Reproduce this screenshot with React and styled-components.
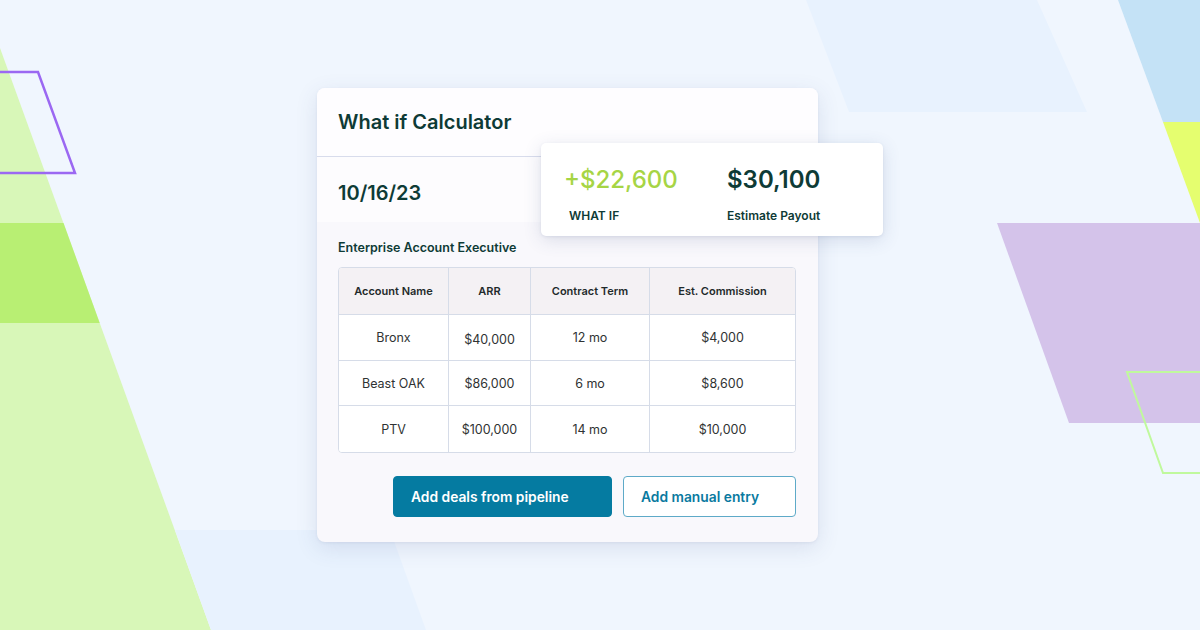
import React from "react";
import styled, { createGlobalStyle } from "styled-components";

const Global = createGlobalStyle`
  * { box-sizing: border-box; }
  html, body { margin: 0; padding: 0; }
  body {
    width: 1200px;
    height: 630px;
    overflow: hidden;
    background: #f0f6fe;
    font-family: Inter, "Noto Sans", "Liberation Sans", sans-serif;
    -webkit-font-smoothing: antialiased;
  }
`;

const Page = styled.div`
  position: relative;
  width: 1200px;
  height: 630px;
  overflow: hidden;
  background: #f0f6fe;
  padding: 88px 0 0 317px;
`;

const Backdrop = styled.svg`
  position: absolute;
  left: 0;
  top: 0;
  width: 1200px;
  height: 630px;
  pointer-events: none;
`;

const Card = styled.div`
  position: relative;
  width: 501px;
  height: 454px;
  border-radius: 8px;
  background: #f9f8fc;
  box-shadow: 0 6px 22px rgba(60, 80, 130, 0.13), 0 1px 3px rgba(60, 80, 130, 0.08);
  display: flex;
  flex-direction: column;
`;

const Header = styled.div`
  height: 69px;
  padding: 0 21px;
  display: flex;
  align-items: center;
  background: #fefdff;
  border-bottom: 1px solid #d8dcec;
  border-radius: 8px 8px 0 0;
`;

const Title = styled.h1`
  margin: 0;
  font-size: 20px;
  line-height: 24px;
  font-weight: 600;
  color: #0e3b36;
`;

const DateRow = styled.div`
  height: 65px;
  padding: 24px 21px 0;
  background: #fdfcfe;
`;

const DateText = styled.div`
  font-size: 20px;
  line-height: 24px;
  font-weight: 600;
  color: #0e3b36;
`;

const Body = styled.div`
  flex: 1;
  padding: 18px 22px 0 21px;
  display: flex;
  flex-direction: column;
`;

const Subtitle = styled.div`
  font-size: 12.5px;
  line-height: 16px;
  font-weight: 600;
  color: #0e3b36;
  margin-bottom: 11px;
`;

const Table = styled.div`
  width: 458px;
  border: 1px solid #d6dce8;
  border-radius: 4px;
  overflow: hidden;
  display: grid;
  grid-template-columns: 110px 82px 119px 1fr;
  background: #ffffff;
`;

const Cell = styled.div`
  height: ${(p) => p.$h}px;
  display: flex;
  align-items: center;
  justify-content: center;
  font-size: ${(p) => (p.$head ? "11px" : "12.5px")};
  font-weight: ${(p) => (p.$head ? 600 : 400)};
  color: ${(p) => (p.$head ? "#1f2a2b" : "#2f3333")};
  background: ${(p) => (p.$head ? "#f4f1f4" : "#ffffff")};
  border-right: ${(p) => (p.$last ? "none" : "1px solid #d6dce8")};
  border-bottom: ${(p) => (p.$bottom ? "none" : "1px solid #d6dce8")};
  padding-top: ${(p) => p.$dy || 0}px;
`;

const Actions = styled.div`
  margin-top: 23px;
  display: flex;
  justify-content: flex-end;
  gap: 11px;
`;

const Button = styled.button`
  height: 41px;
  width: ${(p) => p.$w}px;
  border-radius: 4px;
  padding: 0 17px;
  text-align: left;
  font-family: inherit;
  font-size: 13.8px;
  font-weight: 600;
  cursor: pointer;
  background: ${(p) => (p.$primary ? "#057ba1" : "#ffffff")};
  color: ${(p) => (p.$primary ? "#ffffff" : "#0a7aa0")};
  border: ${(p) => (p.$primary ? "1px solid #057ba1" : "1.5px solid #5eaac8")};
`;

const Popup = styled.div`
  position: absolute;
  left: 224px;
  top: 55px;
  width: 342px;
  height: 93px;
  background: #ffffff;
  border-radius: 5px;
  box-shadow: 0 4px 18px rgba(60, 80, 130, 0.16), 0 1px 3px rgba(60, 80, 130, 0.1);
  padding: 23px 24px 0;
  display: grid;
  grid-template-columns: 162px 1fr;
`;

const Stat = styled.div`
  display: flex;
  flex-direction: column;
`;

const StatValue = styled.div`
  font-size: 24px;
  line-height: 28px;
  font-weight: ${(p) => (p.$green ? 500 : 600)};
  color: ${(p) => (p.$green ? "#a6d545" : "#0e3b36")};
  margin-left: ${(p) => (p.$green ? "-1px" : "0")};
`;

const StatLabel = styled.div`
  margin-top: 14px;
  padding-left: ${(p) => p.$indent || 0}px;
  font-size: 12px;
  line-height: 16px;
  font-weight: 600;
  color: #0e3b36;
`;

const rows = [
  ["Bronx", "$40,000", "12 mo", "$4,000"],
  ["Beast OAK", "$86,000", "6 mo", "$8,600"],
  ["PTV", "$100,000", "14 mo", "$10,000"],
];
const heads = ["Account Name", "ARR", "Contract Term", "Est. Commission"];
const rowHeights = [46, 45, 46];
const offsets = [
  [0, 3, 0, -2],
  [0, 0, 0, -2],
  [0, 0, 0, 0],
];

function Background() {
  return (
    <Backdrop viewBox="0 0 1200 630">
      <polygon points="0,48 211,630 0,630" fill="#d8f7b8" />
      <polygon points="0,223 63.5,223 99.7,323 0,323" fill="#b8ef73" />
      <polygon points="-5,72 38,72 75,173 -5,173" fill="none" stroke="#9b68f2" strokeWidth="2.5" />
      <polygon points="175,530 390,530 426,630 211,630" fill="#e8f2fe" />
      <polygon points="806,0 1037,0 1087,112 849,112" fill="#e8f2fe" />
      <polygon points="1118,0 1200,0 1200,122 1163,122" fill="#c4e2f6" />
      <polygon points="1163,122 1200,122 1200,223" fill="#e5fe6f" />
      <polygon points="997,223 1200,223 1200,423 1069,423" fill="#d4c3ea" />
      <polygon points="1127,372 1210,372 1210,473 1163,473" fill="none" stroke="#c0f99d" strokeWidth="2" />
    </Backdrop>
  );
}

export default function App() {
  return (
    <>
      <Global />
      <Page>
        <Background />
        <Card>
          <Header>
            <Title>What if Calculator</Title>
          </Header>
          <DateRow>
            <DateText>10/16/23</DateText>
          </DateRow>
          <Body>
            <Subtitle>Enterprise Account Executive</Subtitle>
            <Table>
              {heads.map((h, i) => (
                <Cell key={h} $head $h={47} $last={i === 3}>
                  {h}
                </Cell>
              ))}
              {rows.map((r, ri) =>
                r.map((c, ci) => (
                  <Cell
                    key={ri + "-" + ci}
                    $h={rowHeights[ri]}
                    $last={ci === 3}
                    $bottom={ri === rows.length - 1}
                    $dy={offsets[ri][ci]}
                  >
                    {c}
                  </Cell>
                ))
              )}
            </Table>
            <Actions>
              <Button $primary $w={219}>Add deals from pipeline</Button>
              <Button $w={173}>Add manual entry</Button>
            </Actions>
          </Body>
          <Popup>
            <Stat>
              <StatValue $green>+$22,600</StatValue>
              <StatLabel $indent={4}>WHAT IF</StatLabel>
            </Stat>
            <Stat>
              <StatValue>$30,100</StatValue>
              <StatLabel>Estimate Payout</StatLabel>
            </Stat>
          </Popup>
        </Card>
      </Page>
    </>
  );
}
